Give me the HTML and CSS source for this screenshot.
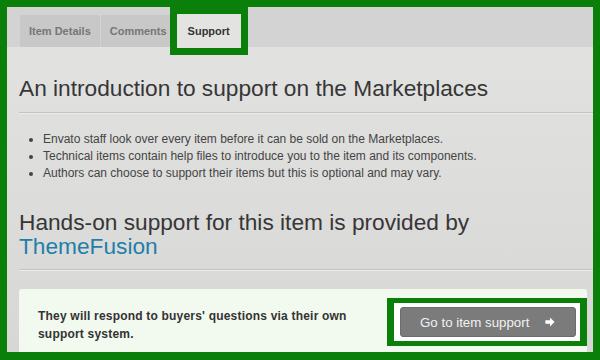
FILE: index.html
```html
<!DOCTYPE html>
<html>
<head>
<meta charset="utf-8">
<link rel="stylesheet" href="styles.css">
</head>
<body>
<div class="frame">
  <div class="tabbar">
    <div class="tab">Item Details</div>
    <div class="tab">Comments</div>
    <div class="tab active">Support</div>
  </div>
  <div class="content">
    <h1 class="title">An introduction to support on the Marketplaces</h1>
    <div class="rule"></div>
    <ul class="points">
      <li>Envato staff look over every item before it can be sold on the Marketplaces.</li>
      <li>Technical items contain help files to introduce you to the item and its components.</li>
      <li>Authors can choose to support their items but this is optional and may vary.</li>
    </ul>
    <h2 class="title sub">Hands-on support for this item is provided by <span class="author">ThemeFusion</span></h2>
    <div class="rule"></div>
    <div class="callout">
      <p class="callout-text">They will respond to buyers' questions via their own support system.</p>
      <div class="mark">
        <a class="btn">Go to item support
          <svg class="arrow" viewBox="0 0 10 10" width="10" height="10"><path d="M5 0.6 L9.6 5 L5 9.4 L5 6.7 L0.4 6.7 L0.4 3.3 L5 3.3 Z" fill="#fff"/></svg>
        </a>
      </div>
    </div>
  </div>
</div>
</body>
</html>
```
FILE: styles.css
```css
html, body {
  margin: 0;
  padding: 0;
}
body {
  width: 600px;
  height: 360px;
  overflow: hidden;
  font-family: "Liberation Sans", Arial, sans-serif;
}
.frame {
  width: 600px;
  height: 360px;
  box-sizing: border-box;
  border: 7px solid #0a800a;
  border-bottom-width: 8px;
  overflow: hidden;
  display: flex;
  flex-direction: column;
  background: linear-gradient(#e3e3e2, #d7d7d6);
}
.tabbar {
  height: 40px;
  flex: none;
  background: #d3d3d3;
  display: flex;
  align-items: flex-end;
  gap: 1px;
  padding-left: 13px;
  position: relative;
  z-index: 1;
}
.tab {
  height: 32px;
  box-sizing: border-box;
  padding: 0 9px;
  display: flex;
  align-items: center;
  background: #c8c8c8;
  color: #767676;
  font-size: 11px;
  font-weight: bold;
  border-radius: 2px 2px 0 0;
}
.tab.active {
  height: 34px;
  margin-bottom: -1px;
  padding: 0 11px;
  background: #e3e3e2;
  color: #333;
  box-shadow: 0 0 0 7px #0a800a;
  border-radius: 0;
}
.content {
  padding: 28px 0 0 12px;
  flex: 1;
}
.title {
  margin: 0;
  font-size: 22.7px;
  line-height: 26px;
  font-weight: normal;
  color: #363636;
}
.title.sub {
  line-height: 24px;
  margin-top: 28px;
}
.author {
  color: #1f7fa8;
  display: block;
}
.rule {
  margin-top: 11px;
  height: 0;
  border-top: 1px solid #c4c4c4;
  border-bottom: 1px solid #ececec;
}
.points {
  margin: 17px 0 0;
  padding-left: 24px;
  font-size: 12px;
  line-height: 17px;
  color: #444;
}
.callout {
  margin: 18px 6px 0 0;
  background: #f2f9ef;
  border-radius: 3px 3px 0 0;
  padding: 9px 0 12px 19px;
  display: flex;
  align-items: center;
  justify-content: space-between;
}
.callout-text {
  margin: 5px 0 0;
  width: 318px;
  font-size: 12px;
  letter-spacing: 0.2px;
  line-height: 18px;
  font-weight: bold;
  color: #333;
}
.mark {
  border: 7px solid #0a800a;
  border-top-width: 5px;
  border-bottom-width: 5px;
  padding: 4px 4px 4px 6px;
  background: #fff;
}
.btn {
  width: 176px;
  height: 30px;
  box-sizing: border-box;
  padding: 0 20px 0 19px;
  display: flex;
  align-items: center;
  justify-content: space-between;
  background: #7b7b7b;
  border: 1px solid #6c6c6c;
  border-radius: 3px;
  color: #f2f2f2;
  font-size: 13.3px;
}
.arrow {
  display: block;
}
```
